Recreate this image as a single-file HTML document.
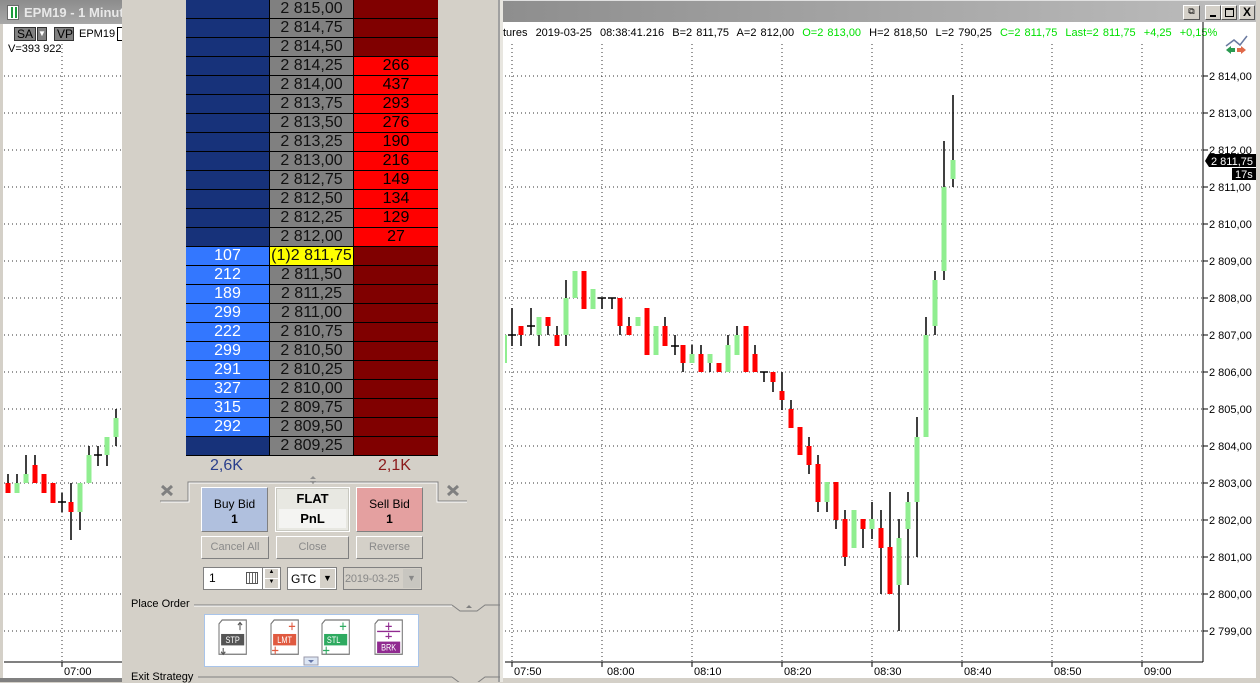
<!DOCTYPE html>
<html><head><meta charset="utf-8">
<style>
*{margin:0;padding:0;box-sizing:border-box}
body{width:1260px;height:682px;overflow:hidden;background:#d4d0c8;font-family:"Liberation Sans",Arial,sans-serif;position:relative}
.a{position:absolute}
.row{position:absolute;left:186px;width:252px;height:19px;font-size:16px;line-height:18px}
.row div{position:absolute;top:0;height:18px;text-align:center;border-bottom:1px solid #000;height:19px}
.c1{left:0;width:84px;border-right:1px solid #000}
.c2{left:84px;width:84px;border-right:1px solid #000;background:#808080;color:#111}
.c3{left:168px;width:84px}
.db{background:#17327a}.bb{background:#3377ff;color:#fff}
.dr{background:#800000}.rr{background:#ff0000;color:#000}
.btn{position:absolute;font-size:11px;text-align:center;border:1px solid #fff;border-right-color:#808080;border-bottom-color:#808080}
</style></head><body>

<!-- LEFT CHART WINDOW -->
<div class="a" style="left:0;top:0;width:122px;height:682px;background:#fff;border-left:3px solid #d4d0c8"></div>
<div class="a" style="left:0;top:0;width:122px;height:24px;background:linear-gradient(#8c8c8c,#a8a8a8)"></div>
<div class="a" style="left:7px;top:5px;width:12px;height:15px;background:#fff;border:1px solid #6a6a6a"><div class="a" style="left:3px;top:1px;width:2px;height:11px;background:#1a9a3a"></div><div class="a" style="left:7px;top:1px;width:2px;height:11px;background:#1a9a3a"></div></div>
<div class="a" style="left:24px;top:5px;font-size:13px;font-weight:bold;color:#e8e8e8;white-space:nowrap">EPM19 - 1 Minute</div>
<div class="a" style="left:14px;top:27px;width:22px;height:14px;background:#808080;border:1px solid #333;font-size:12px;line-height:12px;padding-left:2px">SA</div>
<div class="a" style="left:37px;top:27px;width:10px;height:14px;background:#808080;border:1px solid #333;font-size:8px;color:#fff;text-align:center;line-height:12px">▼</div>
<div class="a" style="left:54px;top:27px;width:20px;height:14px;background:#808080;border:1px solid #333;font-size:12px;line-height:12px;padding-left:2px">VP</div>
<div class="a" style="left:79px;top:28px;font-size:11px">EPM19</div>
<div class="a" style="left:117px;top:27px;width:5px;height:14px;border:1px solid #000;border-right:none"></div>
<div class="a" style="left:8px;top:43px;font-size:11px">V=393 922</div>

<svg class="a" style="left:0;top:0" width="122" height="682">
<g stroke="#333" stroke-dasharray="1,3">
<line x1="62" y1="44" x2="62" y2="662"/>
<line x1="4" y1="76" x2="122" y2="76"/><line x1="4" y1="113" x2="122" y2="113"/><line x1="4" y1="150" x2="122" y2="150"/><line x1="4" y1="187" x2="122" y2="187"/><line x1="4" y1="224" x2="122" y2="224"/><line x1="4" y1="261" x2="122" y2="261"/><line x1="4" y1="298" x2="122" y2="298"/><line x1="4" y1="335" x2="122" y2="335"/><line x1="4" y1="372" x2="122" y2="372"/><line x1="4" y1="409" x2="122" y2="409"/><line x1="4" y1="446" x2="122" y2="446"/><line x1="4" y1="483" x2="122" y2="483"/><line x1="4" y1="520" x2="122" y2="520"/><line x1="4" y1="557" x2="122" y2="557"/><line x1="4" y1="594" x2="122" y2="594"/><line x1="4" y1="631" x2="122" y2="631"/>
</g>
<g stroke="#000" stroke-width="1.5">
<line x1="8" y1="474" x2="8" y2="493"/><line x1="17" y1="474" x2="17" y2="493"/><line x1="26" y1="455" x2="26" y2="483"/><line x1="35" y1="455" x2="35" y2="483"/><line x1="62" y1="493" x2="62" y2="512"/><line x1="58" y1="502" x2="66" y2="502"/><line x1="71" y1="483" x2="71" y2="540"/><line x1="80" y1="483" x2="80" y2="530"/><line x1="89" y1="446" x2="89" y2="483"/><line x1="98" y1="446" x2="98" y2="466"/><line x1="94" y1="455" x2="102" y2="455"/><line x1="107" y1="437" x2="107" y2="466"/><line x1="116" y1="409" x2="116" y2="446"/>
</g>
<g>
<rect x="5.5" y="483" width="5" height="10" fill="#f00"/><rect x="14.5" y="483" width="5" height="10" fill="#90ee90"/><rect x="23.5" y="474" width="5" height="9" fill="#90ee90"/><rect x="32.5" y="465" width="5" height="18" fill="#f00"/><rect x="41.5" y="474" width="5" height="19" fill="#f00"/><rect x="50.5" y="483" width="5" height="20" fill="#f00"/><rect x="68.5" y="502" width="5" height="10" fill="#f00"/><rect x="77.5" y="483" width="5" height="29" fill="#90ee90"/><rect x="86.5" y="455" width="5" height="28" fill="#90ee90"/><rect x="104.5" y="437" width="5" height="18" fill="#90ee90"/><rect x="113.5" y="418" width="5" height="19" fill="#90ee90"/>
</g>
<line x1="4" y1="662" x2="122" y2="662" stroke="#000"/>
<line x1="62" y1="662" x2="62" y2="667" stroke="#000"/>
<text x="64" y="675" font-size="11" font-family="Liberation Sans">07:00</text>
</svg>
<div class="a" style="left:0;top:678px;width:122px;height:4px;background:#808080"></div>

<!-- DOM PANEL -->
<div class="a" style="left:122px;top:0;width:378px;height:682px;background:#d4d0c8"></div>
<div class="a" style="left:498px;top:0;width:2px;height:682px;background:#a0a0a0"></div>
<div class="a" style="left:500px;top:0;width:3px;height:682px;background:#e8e6e0"></div>

<div class="row" style="top:0"><div class="c1 db"></div><div class="c2">2 815,00</div><div class="c3 dr"></div></div>
<div class="row" style="top:19px"><div class="c1 db"></div><div class="c2">2 814,75</div><div class="c3 dr"></div></div>
<div class="row" style="top:38px"><div class="c1 db"></div><div class="c2">2 814,50</div><div class="c3 dr"></div></div>
<div class="row" style="top:57px"><div class="c1 db"></div><div class="c2">2 814,25</div><div class="c3 rr">266</div></div>
<div class="row" style="top:76px"><div class="c1 db"></div><div class="c2">2 814,00</div><div class="c3 rr">437</div></div>
<div class="row" style="top:95px"><div class="c1 db"></div><div class="c2">2 813,75</div><div class="c3 rr">293</div></div>
<div class="row" style="top:114px"><div class="c1 db"></div><div class="c2">2 813,50</div><div class="c3 rr">276</div></div>
<div class="row" style="top:133px"><div class="c1 db"></div><div class="c2">2 813,25</div><div class="c3 rr">190</div></div>
<div class="row" style="top:152px"><div class="c1 db"></div><div class="c2">2 813,00</div><div class="c3 rr">216</div></div>
<div class="row" style="top:171px"><div class="c1 db"></div><div class="c2">2 812,75</div><div class="c3 rr">149</div></div>
<div class="row" style="top:190px"><div class="c1 db"></div><div class="c2">2 812,50</div><div class="c3 rr">134</div></div>
<div class="row" style="top:209px"><div class="c1 db"></div><div class="c2">2 812,25</div><div class="c3 rr">129</div></div>
<div class="row" style="top:228px"><div class="c1 db"></div><div class="c2">2 812,00</div><div class="c3 rr">27</div></div>
<div class="row" style="top:247px"><div class="c1 bb">107</div><div class="c2" style="background:#ffff00">(1)2 811,75</div><div class="c3 dr"></div></div>
<div class="row" style="top:266px"><div class="c1 bb">212</div><div class="c2">2 811,50</div><div class="c3 dr"></div></div>
<div class="row" style="top:285px"><div class="c1 bb">189</div><div class="c2">2 811,25</div><div class="c3 dr"></div></div>
<div class="row" style="top:304px"><div class="c1 bb">299</div><div class="c2">2 811,00</div><div class="c3 dr"></div></div>
<div class="row" style="top:323px"><div class="c1 bb">222</div><div class="c2">2 810,75</div><div class="c3 dr"></div></div>
<div class="row" style="top:342px"><div class="c1 bb">299</div><div class="c2">2 810,50</div><div class="c3 dr"></div></div>
<div class="row" style="top:361px"><div class="c1 bb">291</div><div class="c2">2 810,25</div><div class="c3 dr"></div></div>
<div class="row" style="top:380px"><div class="c1 bb">327</div><div class="c2">2 810,00</div><div class="c3 dr"></div></div>
<div class="row" style="top:399px"><div class="c1 bb">315</div><div class="c2">2 809,75</div><div class="c3 dr"></div></div>
<div class="row" style="top:418px"><div class="c1 bb">292</div><div class="c2">2 809,50</div><div class="c3 dr"></div></div>
<div class="row" style="top:437px"><div class="c1 db"></div><div class="c2">2 809,25</div><div class="c3 dr"></div></div>

<div class="a" style="left:210px;top:457px;font-size:16px;color:#2a3f8c">2,6K</div>
<div class="a" style="left:378px;top:457px;font-size:16px;color:#8b1a1a">2,1K</div>

<svg class="a" style="left:122px;top:470px" width="378" height="212">
<polyline points="38,31 66,31 66,12 316,12 316,31 345,31" fill="none" stroke="#808080"/>
<polyline points="39,32 67,32 67,13 315,13 315,32 345,32" fill="none" stroke="#fff"/>
<path d="M188,9 l3,-3 l3,3z M188,11 l3,3 l3,-3z" fill="#909090"/>
<path d="M40,16 l10,9 M50,16 l-10,9" stroke="#808080" stroke-width="3"/>
<path d="M326,16 l10,9 M336,16 l-10,9" stroke="#808080" stroke-width="3"/>
<line x1="72" y1="135" x2="330" y2="135" stroke="#808080"/><line x1="72" y1="136" x2="330" y2="136" stroke="#fff"/>
<polyline points="330,135 338,141 355,141 363,135 378,135" fill="none" stroke="#808080"/>
<path d="M344,138 l3,-3 l3,3z" fill="#808080"/>
<line x1="76" y1="207" x2="330" y2="207" stroke="#808080"/>
<polyline points="330,207 338,213 355,213 363,207 378,207" fill="none" stroke="#808080"/>
</svg>

<div class="btn" style="left:201px;top:487px;width:67px;height:45px;background:#b0c0de;border-color:#fff #808080 #808080 #fff;font-size:12px;line-height:15px;padding-top:9px">Buy Bid<br><b>1</b></div>
<div class="a" style="left:275px;top:487px;width:75px;height:45px;background:#e8e8e2;border:1px solid #fff;box-shadow:inset 0 0 0 1px #c8c8c0"><div style="text-align:center;font-size:13px;font-weight:bold;padding-top:3px;height:21px">FLAT</div><div style="margin:0 3px;background:#f4f4f2;text-align:center;font-size:13px;font-weight:bold;height:19px;line-height:19px">PnL</div></div>
<div class="btn" style="left:356px;top:487px;width:67px;height:45px;background:#e4a0a0;font-size:12px;line-height:15px;padding-top:9px">Sell Bid<br><b>1</b></div>

<div class="btn" style="left:201px;top:536px;width:68px;height:23px;line-height:21px;color:#8a8a8a">Cancel All</div>
<div class="btn" style="left:276px;top:536px;width:73px;height:23px;line-height:21px;color:#8a8a8a">Close</div>
<div class="btn" style="left:356px;top:536px;width:67px;height:23px;line-height:21px;color:#8a8a8a">Reverse</div>

<div class="a" style="left:203px;top:567px;width:59px;height:23px;background:#fff;border:1px solid #808080;border-right:none;font-size:12px;padding:3px 5px">1</div>
<div class="a" style="left:246px;top:572px;width:12px;height:12px;border:1px solid #555;background:repeating-linear-gradient(90deg,#fff 0 2px,#666 2px 3px),#fff"></div>
<div class="a" style="left:262px;top:567px;width:19px;height:23px;background:#fff;border:1px solid #808080"><div style="position:absolute;left:2px;top:1px;width:13px;height:9px;background:#d4d0c8;font-size:6px;text-align:center">▲</div><div style="position:absolute;left:2px;top:11px;width:13px;height:9px;background:#d4d0c8;font-size:6px;text-align:center">▼</div></div>
<div class="a" style="left:287px;top:567px;width:50px;height:23px;background:#fff;border:1px solid #808080;font-size:12px;padding:4px 3px">GTC</div>
<div class="a" style="left:320px;top:569px;width:15px;height:19px;background:#d4d0c8;font-size:9px;text-align:center;line-height:19px">▼</div>
<div class="a" style="left:343px;top:567px;width:79px;height:23px;background:#d4d0c8;border:1px solid #808080;font-size:11px;padding:5px 1px;color:#888;white-space:nowrap;overflow:hidden;letter-spacing:-0.2px">2019-03-25</div>
<div class="a" style="left:403px;top:569px;width:17px;height:19px;background:#c8c6c0;font-size:9px;text-align:center;line-height:19px;color:#888">▼</div>

<div class="a" style="left:131px;top:598px;font-size:11px">Place Order</div>
<div class="a" style="left:204px;top:614px;width:215px;height:53px;background:#fff;border:1px solid #a8c4ea"></div>
<svg class="a" style="left:204px;top:614px" width="215" height="53">
<g font-family="Liberation Sans" font-size="7" fill="#fff" text-anchor="middle">
<g transform="translate(15,6) scale(1.05,1.27)"><path d="M0,3 l3,-3 h23 v27 h-26z" fill="#fff" stroke="#777"/><rect x="2" y="11" width="22" height="9" fill="#555"/><text x="13" y="18">STP</text><path d="M20,2 v6 M18,4 l2,-2 l2,2 M4,22 v5 M2,25 l2,2 l2,-2" stroke="#555" fill="none"/></g>
<g transform="translate(67,6) scale(1.05,1.27)"><path d="M0,3 l3,-3 h23 v27 h-26z" fill="#fff" stroke="#777"/><rect x="2" y="11" width="22" height="9" fill="#e05a40"/><text x="13" y="18">LMT</text><path d="M20,2 v6 M17,5 h6 M4,21 v6 M1,24 h6" stroke="#e05a40" fill="none"/></g>
<g transform="translate(118,6) scale(1.05,1.27)"><path d="M0,3 l3,-3 h23 v27 h-26z" fill="#fff" stroke="#777"/><rect x="2" y="11" width="22" height="9" fill="#2eaa60"/><text x="11" y="18">STL</text><path d="M20,2 v6 M17,5 h6 M4,21 v6 M1,24 h6" stroke="#2eaa60" fill="none"/></g>
<g transform="translate(171,6) scale(1.05,1.27)"><path d="M0,3 l3,-3 h23 v27 h-26z" fill="#fff" stroke="#777"/><rect x="2" y="17" width="22" height="9" fill="#902a90"/><text x="13" y="24">BRK</text><path d="M13,2 v6 M10,5 h6 M2,9 h22 M13,10 v5 M10,13 h6" stroke="#902a90" fill="none"/></g>
</g>
<rect x="100" y="43" width="14" height="8" fill="#dde6f4" stroke="#99a"/><path d="M104,46 h6 l-3,3z" fill="#6677aa"/>
</svg>
<div class="a" style="left:131px;top:671px;font-size:11px">Exit Strategy</div>

<!-- RIGHT CHART WINDOW -->
<div class="a" style="left:503px;top:0;width:757px;height:682px;background:#fff"></div>
<div class="a" style="left:503px;top:0;width:757px;height:22px;background:linear-gradient(90deg,#8e8e8e,#bdbdbd);border-top:1px solid #e0e0e0"></div>
<div class="a" style="left:1183px;top:5px;width:17px;height:15px;background:#d4d0c8;border:1px solid #fff;border-right-color:#555;border-bottom-color:#555;font-size:9px;text-align:center">⧉</div>
<div class="a" style="left:1205px;top:5px;width:16px;height:15px;background:#d4d0c8;border:1px solid #fff;border-right-color:#555;border-bottom-color:#555"><div class="a" style="left:4px;top:9px;width:6px;height:2px;background:#000"></div></div>
<div class="a" style="left:1221px;top:5px;width:16px;height:15px;background:#d4d0c8;border:1px solid #fff;border-right-color:#555;border-bottom-color:#555"><div class="a" style="left:3px;top:2px;width:9px;height:9px;border:1px solid #000;border-top-width:2px"></div></div>
<div class="a" style="left:1239px;top:5px;width:16px;height:15px;background:#d4d0c8;border:1px solid #fff;border-right-color:#555;border-bottom-color:#555;font-size:12px;font-weight:bold;text-align:center;line-height:12px">X</div>
<div class="a" style="left:1256px;top:0;width:4px;height:682px;background:#d4d0c8"></div>
<div class="a" style="left:503px;top:678px;width:757px;height:4px;background:#d4d0c8"></div>

<div class="a" style="left:503px;top:27px;font-size:11px;white-space:nowrap;word-spacing:1px">tures&nbsp; 2019-03-25&nbsp; 08:38:41.216&nbsp; B=2 811,75&nbsp; A=2 812,00&nbsp; <span style="color:#00e000">O=2 813,00</span>&nbsp; H=2 818,50&nbsp; L=2 790,25&nbsp; <span style="color:#00e000">C=2 811,75&nbsp; Last=2 811,75&nbsp; +4,25&nbsp; +0,15%</span></div>

<svg class="a" style="left:503px;top:0" width="753" height="678">
<g transform="translate(-503,0)">
<g stroke="#333" stroke-dasharray="1,3">
<line x1="512" y1="44" x2="512" y2="662"/><line x1="602" y1="44" x2="602" y2="662"/><line x1="692" y1="44" x2="692" y2="662"/><line x1="782" y1="44" x2="782" y2="662"/><line x1="872" y1="44" x2="872" y2="662"/><line x1="962" y1="44" x2="962" y2="662"/><line x1="1052" y1="44" x2="1052" y2="662"/><line x1="1142" y1="44" x2="1142" y2="662"/>
<line x1="505" y1="76" x2="1202" y2="76"/><line x1="505" y1="113" x2="1202" y2="113"/><line x1="505" y1="150" x2="1202" y2="150"/><line x1="505" y1="187" x2="1202" y2="187"/><line x1="505" y1="224" x2="1202" y2="224"/><line x1="505" y1="261" x2="1202" y2="261"/><line x1="505" y1="298" x2="1202" y2="298"/><line x1="505" y1="335" x2="1202" y2="335"/><line x1="505" y1="372" x2="1202" y2="372"/><line x1="505" y1="409" x2="1202" y2="409"/><line x1="505" y1="446" x2="1202" y2="446"/><line x1="505" y1="483" x2="1202" y2="483"/><line x1="505" y1="520" x2="1202" y2="520"/><line x1="505" y1="557" x2="1202" y2="557"/><line x1="505" y1="594" x2="1202" y2="594"/><line x1="505" y1="631" x2="1202" y2="631"/>
</g>
<g stroke="#000" stroke-width="1.5">
<line x1="512" y1="308" x2="512" y2="346"/><line x1="508" y1="335" x2="516" y2="335"/>
<line x1="521" y1="326" x2="521" y2="346"/>
<line x1="531" y1="308" x2="531" y2="335"/><line x1="527" y1="326" x2="535" y2="326"/>
<line x1="539" y1="317" x2="539" y2="346"/><line x1="548" y1="317" x2="548" y2="335"/><line x1="557" y1="326" x2="557" y2="346"/><line x1="566" y1="280" x2="566" y2="346"/>
<line x1="602" y1="298" x2="602" y2="309"/><line x1="598" y1="298" x2="606" y2="298"/>
<line x1="612" y1="298" x2="612" y2="309"/><line x1="608" y1="298" x2="616" y2="298"/>
<line x1="620" y1="298" x2="620" y2="335"/><line x1="629" y1="317" x2="629" y2="335"/><line x1="665" y1="317" x2="665" y2="346"/>
<line x1="675" y1="335" x2="675" y2="355"/><line x1="671" y1="346" x2="679" y2="346"/>
<line x1="683" y1="345" x2="683" y2="372"/><line x1="692" y1="345" x2="692" y2="363"/><line x1="701" y1="345" x2="701" y2="372"/><line x1="710" y1="354" x2="710" y2="372"/><line x1="728" y1="335" x2="728" y2="372"/><line x1="737" y1="326" x2="737" y2="355"/><line x1="755" y1="345" x2="755" y2="372"/>
<line x1="764" y1="372" x2="764" y2="382"/><line x1="760" y1="372" x2="768" y2="372"/>
<line x1="773" y1="372" x2="773" y2="392"/><line x1="782" y1="372" x2="782" y2="410"/><line x1="791" y1="400" x2="791" y2="428"/><line x1="809" y1="437" x2="809" y2="474"/><line x1="818" y1="455" x2="818" y2="512"/><line x1="827" y1="482" x2="827" y2="512"/><line x1="836" y1="482" x2="836" y2="529"/><line x1="845" y1="510" x2="845" y2="566"/><line x1="863" y1="519" x2="863" y2="548"/><line x1="872" y1="502" x2="872" y2="539"/><line x1="881" y1="510" x2="881" y2="594"/><line x1="890" y1="492" x2="890" y2="594"/><line x1="899" y1="519" x2="899" y2="631"/><line x1="908" y1="492" x2="908" y2="585"/><line x1="917" y1="417" x2="917" y2="557"/><line x1="926" y1="317" x2="926" y2="437"/><line x1="935" y1="271" x2="935" y2="335"/><line x1="944" y1="141" x2="944" y2="280"/><line x1="953" y1="95" x2="953" y2="187"/>
</g>
<g>
<rect x="505" y="335" width="2" height="28" fill="#90ee90"/>
<rect x="518.5" y="326" width="5" height="9" fill="#f00"/>
<rect x="536.5" y="317" width="5" height="18" fill="#90ee90"/>
<rect x="545.5" y="317" width="5" height="9" fill="#f00"/>
<rect x="554.5" y="335" width="5" height="11" fill="#f00"/>
<rect x="563.5" y="298" width="5" height="37" fill="#90ee90"/>
<rect x="572.5" y="271" width="5" height="27" fill="#90ee90"/>
<rect x="581.5" y="271" width="5" height="38" fill="#f00"/>
<rect x="590.5" y="289" width="5" height="20" fill="#90ee90"/>
<rect x="617.5" y="298" width="5" height="28" fill="#f00"/>
<rect x="626.5" y="326" width="5" height="9" fill="#f00"/>
<rect x="635.5" y="317" width="5" height="9" fill="#90ee90"/>
<rect x="644.5" y="308" width="5" height="47" fill="#f00"/>
<rect x="653.5" y="326" width="5" height="29" fill="#90ee90"/>
<rect x="662.5" y="326" width="5" height="20" fill="#f00"/>
<rect x="680.5" y="345" width="5" height="18" fill="#f00"/>
<rect x="689.5" y="354" width="5" height="9" fill="#90ee90"/>
<rect x="698.5" y="354" width="5" height="18" fill="#f00"/>
<rect x="707.5" y="354" width="5" height="9" fill="#90ee90"/>
<rect x="716.5" y="363" width="5" height="9" fill="#f00"/>
<rect x="725.5" y="345" width="5" height="27" fill="#90ee90"/>
<rect x="734.5" y="335" width="5" height="20" fill="#90ee90"/>
<rect x="743.5" y="326" width="5" height="46" fill="#f00"/>
<rect x="752.5" y="354" width="5" height="18" fill="#f00"/>
<rect x="770.5" y="372" width="5" height="10" fill="#f00"/>
<rect x="779.5" y="391" width="5" height="9" fill="#f00"/>
<rect x="788.5" y="409" width="5" height="19" fill="#f00"/>
<rect x="797.5" y="427" width="5" height="28" fill="#f00"/>
<rect x="806.5" y="446" width="5" height="19" fill="#f00"/>
<rect x="815.5" y="464" width="5" height="38" fill="#f00"/>
<rect x="824.5" y="482" width="5" height="20" fill="#90ee90"/>
<rect x="833.5" y="482" width="5" height="38" fill="#f00"/>
<rect x="842.5" y="519" width="5" height="38" fill="#f00"/>
<rect x="851.5" y="510" width="5" height="38" fill="#90ee90"/>
<rect x="860.5" y="519" width="5" height="10" fill="#f00"/>
<rect x="869.5" y="519" width="5" height="10" fill="#90ee90"/>
<rect x="878.5" y="528" width="5" height="20" fill="#f00"/>
<rect x="887.5" y="547" width="5" height="47" fill="#f00"/>
<rect x="896.5" y="538" width="5" height="47" fill="#90ee90"/>
<rect x="905.5" y="502" width="5" height="27" fill="#90ee90"/>
<rect x="914.5" y="437" width="5" height="65" fill="#90ee90"/>
<rect x="923.5" y="335" width="5" height="102" fill="#90ee90"/>
<rect x="932.5" y="280" width="5" height="46" fill="#90ee90"/>
<rect x="941.5" y="187" width="5" height="84" fill="#90ee90"/>
<rect x="950.5" y="160" width="5" height="19" fill="#90ee90"/>
</g>
<line x1="1203" y1="22" x2="1203" y2="662" stroke="#000"/>
<line x1="505" y1="662" x2="1203" y2="662" stroke="#000"/>
<g stroke="#000">
<line x1="1203" y1="76" x2="1208" y2="76"/><line x1="1203" y1="113" x2="1208" y2="113"/><line x1="1203" y1="150" x2="1208" y2="150"/><line x1="1203" y1="187" x2="1208" y2="187"/><line x1="1203" y1="224" x2="1208" y2="224"/><line x1="1203" y1="261" x2="1208" y2="261"/><line x1="1203" y1="298" x2="1208" y2="298"/><line x1="1203" y1="335" x2="1208" y2="335"/><line x1="1203" y1="372" x2="1208" y2="372"/><line x1="1203" y1="409" x2="1208" y2="409"/><line x1="1203" y1="446" x2="1208" y2="446"/><line x1="1203" y1="483" x2="1208" y2="483"/><line x1="1203" y1="520" x2="1208" y2="520"/><line x1="1203" y1="557" x2="1208" y2="557"/><line x1="1203" y1="594" x2="1208" y2="594"/><line x1="1203" y1="631" x2="1208" y2="631"/>
<line x1="512" y1="662" x2="512" y2="667"/><line x1="602" y1="662" x2="602" y2="667"/><line x1="692" y1="662" x2="692" y2="667"/><line x1="782" y1="662" x2="782" y2="667"/><line x1="872" y1="662" x2="872" y2="667"/><line x1="962" y1="662" x2="962" y2="667"/><line x1="1052" y1="662" x2="1052" y2="667"/><line x1="1142" y1="662" x2="1142" y2="667"/>
</g>
<g font-family="Liberation Sans" font-size="11" fill="#000">
<text x="1209" y="80">2 814,00</text><text x="1209" y="117">2 813,00</text><text x="1209" y="154">2 812,00</text><text x="1209" y="191">2 811,00</text><text x="1209" y="228">2 810,00</text><text x="1209" y="265">2 809,00</text><text x="1209" y="302">2 808,00</text><text x="1209" y="339">2 807,00</text><text x="1209" y="376">2 806,00</text><text x="1209" y="413">2 805,00</text><text x="1209" y="450">2 804,00</text><text x="1209" y="487">2 803,00</text><text x="1209" y="524">2 802,00</text><text x="1209" y="561">2 801,00</text><text x="1209" y="598">2 800,00</text><text x="1209" y="635">2 799,00</text>
<text x="514" y="675">07:50</text><text x="607" y="675">08:00</text><text x="694" y="675">08:10</text><text x="784" y="675">08:20</text><text x="874" y="675">08:30</text><text x="964" y="675">08:40</text><text x="1054" y="675">08:50</text><text x="1144" y="675">09:00</text>
</g>
<path d="M1205,161 l4,-7 h47 v13 h-47z" fill="#000"/>
<text x="1211" y="165" font-family="Liberation Sans" font-size="11" fill="#fff">2 811,75</text>
<rect x="1232" y="168" width="24" height="12" fill="#000"/>
<text x="1235" y="178" font-family="Liberation Sans" font-size="11" fill="#fff">17s</text>
<polyline points="1226,46 1234,40 1240,45 1247,36" fill="none" stroke="#6a7aa0" stroke-width="1.5"/>
<path d="M1226,50 l5,-4 v2 h4 v4 h-4 v2z" fill="#2a9a50"/><path d="M1246,50 l-5,-4 v2 h-4 v4 h4 v2z" fill="#e06a4a"/>
</g>
</svg>
</body></html>
